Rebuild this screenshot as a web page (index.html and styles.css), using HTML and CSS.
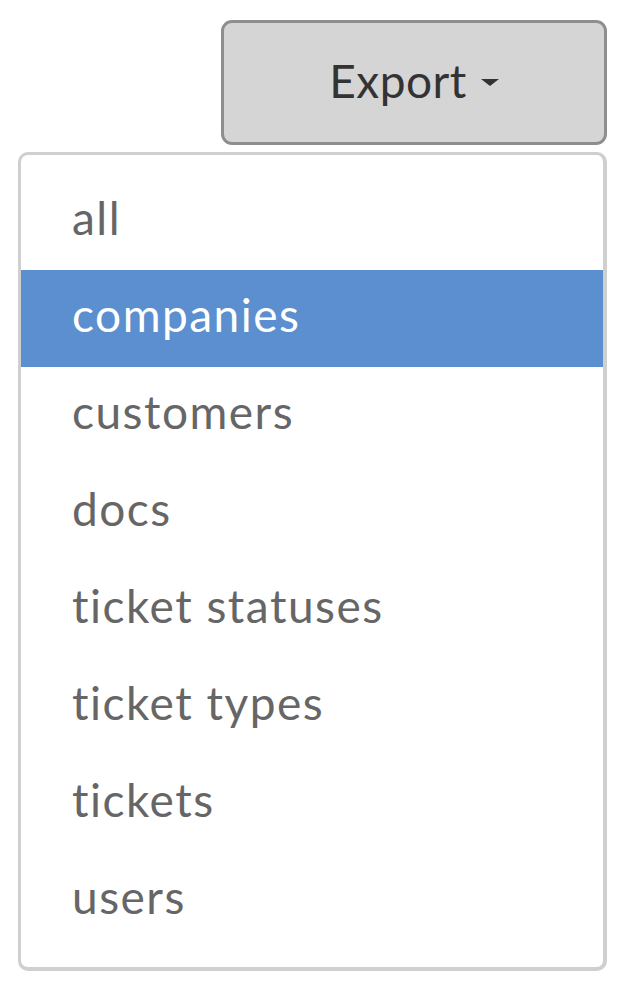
FILE: index.html
```html
<!DOCTYPE html>
<html>
<head>
<meta charset="utf-8">
<link rel="stylesheet" href="styles.css">
</head>
<body>
<div class="page">
  <div class="btn-row">
    <button class="export-btn"><span>Export</span><span class="caret"></span></button>
  </div>
  <ul class="menu">
    <li class="item">all</li>
    <li class="item active">companies</li>
    <li class="item">customers</li>
    <li class="item">docs</li>
    <li class="item">ticket statuses</li>
    <li class="item">ticket types</li>
    <li class="item">tickets</li>
    <li class="item">users</li>
  </ul>
</div>
</body>
</html>
```

FILE: styles.css
```css
html, body {
  margin: 0;
  padding: 0;
  background: #fff;
}
.page {
  width: 622px;
  padding-top: 20px;
  font-family: "Lato", "Open Sans", sans-serif;
  font-variant-ligatures: none;
}
.btn-row {
  display: flex;
  justify-content: flex-end;
  padding-right: 15px;
}
.export-btn {
  box-sizing: border-box;
  width: 386px;
  height: 125px;
  border: 3px solid #8e8e8e;
  border-radius: 11px;
  background: #d5d5d5;
  display: flex;
  align-items: center;
  justify-content: center;
  gap: 14px;
  font-family: inherit;
  font-variant-ligatures: none;
  font-size: 46px;
  letter-spacing: 0.5px;
  color: #333;
  padding: 0 0 4px 0;
}
.caret {
  width: 0;
  height: 0;
  border-left: 9px solid transparent;
  border-right: 9px solid transparent;
  border-top: 7px solid #333;
  margin-top: 4px;
}
.menu {
  box-sizing: border-box;
  list-style: none;
  margin: 7px 0 0 18px;
  padding: 18px 0 18px 0;
  width: 589px;
  border-style: solid;
  border-color: #cfcfcf;
  border-width: 3px 4px 4px 3px;
  border-radius: 10px;
  background: #fff;
}
.item {
  height: 97px;
  display: flex;
  align-items: center;
  padding-left: 51px;
  padding-bottom: 8px;
  box-sizing: border-box;
  font-size: 46px;
  letter-spacing: 1.5px;
  color: #666;
}
.item.active {
  background: #5b8fd0;
  color: #fff;
}
```
